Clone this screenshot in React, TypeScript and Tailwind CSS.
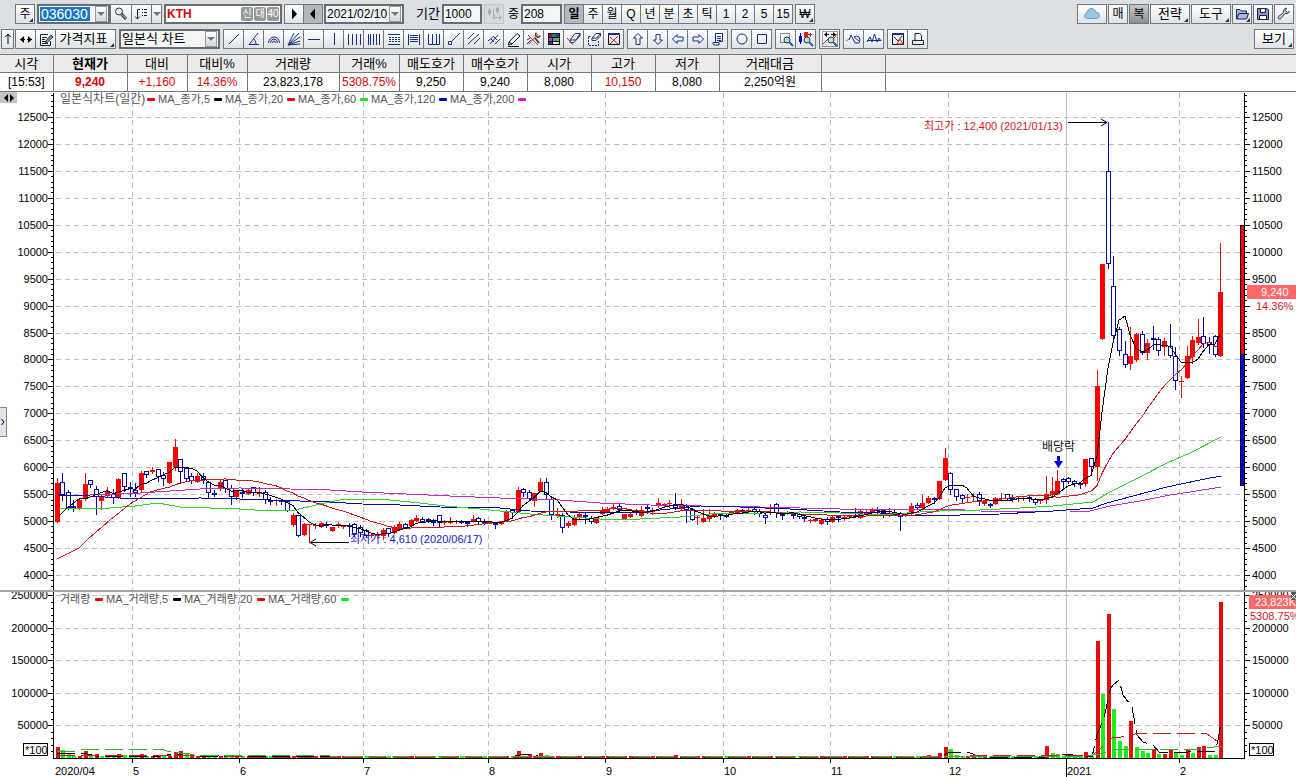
import { FunctionComponent, ReactNode } from 'react';

const NAVY = '#1c2f7c';
const BLUE = '#0808a8';
const RED = '#ff0000';

// one candle per trading day: direction, high, body top, body bottom, low (chart units)
const CANDLES = `
u 478 483 522 522|d 473 482 495 500|d 490 492 508 509|d 500 506 508 511|u 499 500 509 509|u 473 484 499 500|d 480 480 485 487|d 486 489 497 514
u 495 497 501 509|u 487 491 496 497|d 489 494 498 503|u 478 479 498 498|d 473 473 487 491|d 482 487 489 496|d 483 490 493 496|u 471 473 490 491
d 471 471 475 477|u 467 470 472 473|d 469 469 477 481|d 472 475 479 485|u 462 462 483 483|u 439 447 467 470|d 459 459 472 483|d 468 468 479 481
d 473 476 481 483|u 473 476 482 482|d 473 476 480 483|d 482 482 493 497|d 490 493 495 496|u 480 482 488 490|d 480 480 489 492|d 485 488 497 504
u 490 491 497 499|d 489 492 494 497|u 489 490 494 494|d 487 487 493 495|u 487 493 494 496|d 490 492 500 503|d 497 500 501 504|u 499 500 501 505
d 499 500 501 504|d 501 501 511 511|u 513 515 525 526|d 515 515 536 536|u 523 524 535 535|u 524 524 525 542|u 523 525 526 528|u 522 523 527 527
d 522 524 526 527|u 527 527 531 531|u 522 524 526 527|u 525 525 527 528|d 523 525 527 536|d 523 524 534 536|d 525 527 533 536|d 529 530 536 536
u 533 535 536 537|u 532 535 536 538|u 528 530 536 539|d 528 528 534 536|u 525 527 533 533|u 522 524 530 530|d 523 524 528 528|u 519 520 526 526
u 515 518 521 521|d 517 519 522 522|d 518 519 521 522|d 519 521 522 525|d 515 515 523 526|u 520 521 523 524|u 517 521 523 523|u 520 521 522 523
d 520 521 522 523|d 521 522 523 526|u 515 519 521 521|d 517 518 522 524|d 519 521 523 524|u 521 522 523 523|d 522 523 525 528|u 521 521 524 524
u 510 511 521 521|d 509 510 513 518|u 487 490 512 512|d 488 489 493 496|d 490 492 499 500|u 493 493 501 506|u 478 482 491 491|d 478 482 495 498
d 498 499 515 519|u 508 514 516 517|d 513 515 528 532|u 521 523 526 527|u 515 517 525 525|u 513 514 518 518|d 513 515 517 523|d 516 518 522 523
u 517 518 523 523|u 507 510 514 514|u 507 509 512 512|u 503 507 509 509|d 504 506 510 511|u 514 514 519 519|u 513 514 517 517|d 509 510 513 514
u 506 510 516 516|d 505 507 509 513|u 508 511 512 514|u 498 503 506 507|u 503 504 506 507|u 500 503 504 507|d 493 504 508 509|u 499 504 509 509
d 504 505 510 522|d 508 509 520 520|u 515 517 518 524|u 509 518 522 522|u 509 515 519 521|u 512 513 517 517|d 513 514 516 519|d 514 515 516 517
u 511 512 513 514|u 509 510 513 513|d 509 510 512 513|u 508 510 512 513|d 508 509 512 514|d 509 511 514 516|d 514 515 518 523|u 504 508 509 514
d 503 504 513 517|d 513 514 515 519|u 511 512 513 514|d 513 514 515 518|d 513 514 517 518|d 515 517 519 521|u 519 520 521 522|u 518 519 521 521
u 518 520 524 524|d 517 519 522 524|u 516 517 522 522|d 515 516 518 521|u 515 517 518 520|u 515 516 517 518|d 508 515 517 517|u 509 511 518 518
u 510 512 514 514|u 508 509 512 512|d 507 509 511 514|d 509 510 513 517|u 508 513 515 516|d 509 513 515 515|d 512 513 517 530|u 513 514 516 516
u 503 506 514 514|d 503 505 508 509|u 495 503 508 508|u 496 498 503 503|d 497 498 500 503|u 481 481 499 499|u 448 458 480 480|d 472 473 490 494
d 489 489 497 500|d 494 495 499 502|u 494 497 498 502|u 493 496 497 500|d 492 494 501 505|u 501 501 504 505|d 503 504 506 507|u 497 498 504 504
u 493 498 499 500|d 494 494 499 499|d 495 498 500 501|u 496 498 499 501|u 497 498 499 500|d 496 497 499 501|d 498 499 503 504|u 499 500 501 503
u 476 494 500 503|u 477 491 495 495|u 470 481 494 494|d 478 479 482 488|d 477 478 482 483|d 480 481 484 486|d 482 483 485 488|u 459 459 484 486
d 458 458 467 475|u 370 386 467 480|u 264 264 339 339|d 122 171 264 268|d 256 286 336 340|d 327 329 351 355|d 341 354 365 367|u 327 356 364 369
u 333 334 360 361|d 331 334 353 354|u 339 343 353 359|d 326 338 340 349|d 337 339 351 355|u 338 341 347 355|d 324 346 356 357|d 347 356 381 389
u 376 381 382 397|u 346 356 378 378|u 336 340 357 363|u 319 337 343 344|d 317 336 344 347|d 337 342 345 353|d 335 336 355 356|u 243 292 356 356`
  .trim()
  .split(/[|\n]/)
  .map((row, i) => {
    const [dir, ...values] = row.trim().split(' ');
    const [high, top, bottom, low] = values.map(Number);
    return { up: dir === 'u', high, top, bottom, low, x: Math.round(56.5 + i * 5.622) };
  });

// volume bars taller than the base line, negative ones are drawn green
const VOLUMES: Record<number, number> = {
  0: 11, 1: -8, 2: -4, 3: -2, 4: 2, 5: 7, 6: -3, 7: 4, 8: -2, 9: -3, 11: 4, 12: -3, 15: 4, 18: 3,
  21: 6, 22: 7, 23: -4, 24: 4, 26: 2, 82: 7, 84: 4, 86: 5, 87: -3, 110: 3, 155: 3, 157: 5,
  158: 11, 159: -9, 160: -3, 161: -2, 165: 3, 176: 12, 177: -5, 178: -4, 183: 6, 184: -2,
  185: 117, 186: -64, 187: 144, 188: -49, 189: -17, 190: -12, 191: 37, 192: -11, 193: -7,
  194: -5, 195: 9, 196: -4, 197: 4, 198: 9, 199: -5, 200: -3, 201: 8, 202: -5, 203: 11,
  204: 12, 205: -3, 206: -3, 207: 156,
};

const MONTHS = [
  { x: 132, label: '5' }, { x: 239, label: '6' }, { x: 363, label: '7' }, { x: 488, label: '8' },
  { x: 605, label: '9' }, { x: 723, label: '10' }, { x: 830, label: '11' }, { x: 948, label: '12' },
  { x: 1066, label: '2021' }, { x: 1179, label: '2' },
];

const priceY = (price: number) => Math.round(117 + (12500 - price) * 0.05388);
const volumeY = (volume: number) => Math.round(758 - volume * 0.000652);
const PRICES = Array.from({ length: 18 }, (_, i) => 12500 - i * 500);
const VOLUME_STEPS = [250000, 200000, 150000, 100000, 50000];

const movingAverage = (days: number) =>
  CANDLES.slice(days - 1).map((candle, i) => {
    const sum = CANDLES.slice(i, i + days).reduce((acc, c) => acc + (c.up ? c.top : c.bottom), 0);
    return `${candle.x},${(sum / days).toFixed(1)}`;
  }).join(' ');

const PRICE_LINES = [
  {
    color: '#c030c0',
    points: '57,496 90,495 140,493 200,489 240,488 290,489 330,490 362,492 450,496 500,498 560,500 600,503 650,505 700,506 760,507 800,508 840,509 950,509 980,511 1053,512 1070,512 1090,511 1110,506 1140,501 1170,495 1190,492 1221,487',
  },
  {
    color: BLUE,
    points: '57,495 90,496 120,498 150,499 200,498 240,499 300,501 330,502 362,504 400,505 440,507 500,508 530,511 570,512 600,513 640,512 670,509 700,506 740,507 790,509 840,512 880,513 900,515 960,515 1000,514 1053,511 1093,508 1107,503 1133,496 1167,487 1200,480 1221,476',
  },
  {
    color: '#30d030',
    points: '59,508 110,508 135,506 158,503 180,507 210,508 240,509 270,511 295,510 320,504 340,500 362,499 390,500 420,503 445,506 480,509 510,512 530,514 570,517 600,519 640,519 680,517 700,515 720,513 760,513 800,512 840,513 880,515 920,512 940,511 980,510 1020,508 1053,506 1093,502 1110,492 1140,477 1167,463 1190,453 1221,437',
  },
  {
    color: '#c02020',
    points: `57,559 79,548 88,539 110,520 130,504 150,492 ${movingAverage(20)}`,
  },
  { color: '#000000', points: `59,516 66,509 ${movingAverage(5)}` },
];

const VOLUME_LINES = [
  {
    color: '#000000',
    points: '57,753 82,753 97,756 160,756 175,754 190,756 510,757 525,754 545,757 940,757 950,752 968,752 975,755 990,757 1045,757 1065,754 1080,756 1092,757 1097,735 1104,718 1110,690 1113,685 1119,680 1123,695 1132,707 1137,735 1143,742 1153,745 1159,752 1183,753 1193,751 1215,751 1218,740 1221,723',
  },
  {
    color: '#c02020',
    points: '57,755 200,755 250,757 510,757 560,757 940,757 1000,755 1060,755 1092,756 1104,745 1112,738 1130,736 1135,734 1200,733 1207,734 1217,741 1221,741',
  },
  {
    color: '#30b030',
    points: '57,751 75,751 88,749 160,749 171,752 200,755 313,755 330,756 1085,756 1100,754 1113,750 1200,749 1221,746',
  },
];

const LEGEND = [
  { x: 60, label: '일본식차트(일간)', swatch: 147, color: '#e01010', y: 103, big: true },
  { x: 158, label: 'MA_종가,5', swatch: 214, color: '#000000', y: 103 },
  { x: 225, label: 'MA_종가,20', swatch: 287, color: '#e01010', y: 103 },
  { x: 298, label: 'MA_종가,60', swatch: 360, color: '#20e020', y: 103 },
  { x: 371, label: 'MA_종가,120', swatch: 439, color: '#0000c0', y: 103 },
  { x: 450, label: 'MA_종가,200', swatch: 518, color: '#e010d0', y: 103 },
  { x: 60, label: '거래량', swatch: 95, color: '#e01010', y: 603 },
  { x: 106, label: 'MA_거래량,5', swatch: 173, color: '#000000', y: 603 },
  { x: 184, label: 'MA_거래량,20', swatch: 257, color: '#e01010', y: 603 },
  { x: 268, label: 'MA_거래량,60', swatch: 341, color: '#20e020', y: 603 },
];

const QUOTES = [
  { name: '시각', value: '[15:53]', width: 'w-[53px]' },
  { name: '현재가', value: '9,240', width: 'w-[74px]', red: true, bold: true },
  { name: '대비', value: '+1,160', width: 'w-[60px]', red: true },
  { name: '대비%', value: '14.36%', width: 'w-[60px]', red: true },
  { name: '거래량', value: '23,823,178', width: 'w-[92px]' },
  { name: '거래%', value: '5308.75%', width: 'w-[60px]', red: true },
  { name: '매도호가', value: '9,250', width: 'w-[64px]' },
  { name: '매수호가', value: '9,240', width: 'w-[64px]' },
  { name: '시가', value: '8,080', width: 'w-[64px]' },
  { name: '고가', value: '10,150', width: 'w-[64px]', red: true },
  { name: '저가', value: '8,080', width: 'w-[64px]' },
  { name: '거래대금', value: '2,250억원', width: 'w-[102px]' },
  { name: '', value: '', width: 'w-[64px]' },
  { name: '', value: '', width: '' },
];

const PERIODS = ['일', '주', '월', 'Q', '년', '분', '초', '틱', '1', '2', '5', '15'];

interface IconProps {
  d?: string;
  color?: string;
  children?: ReactNode;
}

const Icon: FunctionComponent<IconProps> = ({ d, color = NAVY, children }) => (
  <svg viewBox="0 0 18 18" className="h-[18px] w-[18px] shrink-0" fill="none" stroke={color} aria-hidden="true">
    {d && <path d={d} />}
    {children}
  </svg>
);

const magnifier = (
  <>
    <circle cx="10" cy="10" r="3" fill="#a8e8e8" stroke="#333" />
    <path d="M12.5 12.5l3.5 3.5" stroke="#2060a0" strokeWidth="2" />
  </>
);

const DRAW_TOOLS = [
  { name: '추세선', icon: <Icon d="M4 14L14 4" /> },
  { name: '각도선', icon: <Icon d="M13 3L4 14.5H14M9 9q2 2 2 5" /> },
  { name: '원호', icon: <Icon d="M3.5 13a5.5 6 0 0 1 11 0M5.5 13a3.5 4 0 0 1 7 0M7.5 13a1.5 2 0 0 1 3 0" /> },
  { name: '팬', icon: <Icon d="M3 15L14 3M3 15L9 3M3 15L15 7M3 15L15 11M3 15L15 14" /> },
  { name: '수평선', icon: <Icon d="M3 9.5H15" /> },
  { name: '수직선', icon: <Icon d="M9.5 3V15" /> },
  { name: '시간대', icon: <Icon d="M3.5 4V15M7.5 4V15M11.5 4V15M15.5 4V15" /> },
  { name: '피보나치 시간대', icon: <Icon d="M3.5 4V15M5.5 4V15M8.5 4V15M11.5 4V15M14.5 4V15" /> },
  {
    name: '되돌림',
    icon: <Icon d="M3 4.5H15M3 14.5H15"><path d="M4 7.5H15M4 9.5H15M4 11.5H15" strokeDasharray="2 1" /></Icon>,
  },
  { name: '분할선', icon: <Icon d="M3.5 4V15M14.5 4V15M5 5.5H13M5 7.5H13M5 9.5H13M5 11.5H13" /> },
  { name: '사이클', icon: <Icon d="M3.5 4V14.5H7.5V4M7.5 14.5H11.5V4M11.5 14.5H14.5V4" /> },
  { name: '연장선', icon: <Icon d="M7 11L15 3M3.5 11.5H6.5V14.5H3.5Z" /> },
  { name: '평행선', icon: <Icon d="M3 9L9 3M3 14L14 4M9 14L15 8" /> },
  { name: '삼등분선', icon: <Icon d="M3 11L9 6M5 14L13 5M10 14L15 9M6 9l3 3M9 7l3 3" /> },
  { name: '펜', icon: <Icon color="#111" d="M4 12L12 3.5L15 6L7 14L3.5 15Z M4 12l3 2M3 16.5H14" /> },
  {
    name: '설정',
    icon: (
      <Icon>
        <path d="M10 8L14 13" stroke="#444" strokeWidth="2" />
        <path d="M11 2.5L10.500 5.500L13 7.500L15.500 5.500" stroke="#444" strokeWidth="1.5" />
        <path d="M3 5L13 15M13 4L4 14" stroke="#d02020" />
        <path d="M2 14L6 10M2 10L5 8" />
      </Icon>
    ),
  },
  {
    name: '색상',
    icon: (
      <Icon>
        <g stroke="none">
          <rect x="3" y="3" width="12" height="12" fill="#111" />
          <path d="M4 4h3v3H4z" fill="#882030" /><path d="M7 4h4v3H7z" fill="#208070" />
          <path d="M11 4h3v3h-3z" fill="#3040a0" /><path d="M4 8h3v3H4z" fill="#c040a0" />
          <path d="M8 8h3v3H8z" fill="#40a0e0" /><path d="M11 8h3v3h-3z" fill="#50c050" />
          <path d="M4 12h3v2H4z" fill="#3040a0" /><path d="M8 12h3v2H8z" fill="#e0f0ff" />
          <path d="M11 12h3v2h-3z" fill="#f0e070" />
        </g>
      </Icon>
    ),
  },
  {
    name: '지우기',
    icon: <Icon d="M5 10L10 3.5H15L11 10Z M5 10V12.5H9L15 6V3.5"><path d="M2 8L8 15" stroke="#d02020" /></Icon>,
  },
  {
    name: '전체 지우기',
    icon: (
      <Icon d="M7 8L11 3.5H15.5L12 8Z M7 8V10.5H11L15.5 6V3.5">
        <path d="M3.5 6.5H6M3.5 7V15.5H13.5V11" strokeDasharray="2 1" />
      </Icon>
    ),
  },
  {
    name: '닫기',
    icon: (
      <Icon color="#111" d="M3.5 4.5H14.5V14.5H3.5Z">
        <path d="M3 4H15" stroke={NAVY} strokeWidth="2" />
        <path d="M5 7L13 14M13 6L5 14" stroke="#c02020" />
      </Icon>
    ),
  },
];

const ARROW_TOOLS = [
  { name: '위쪽', icon: <Icon d="M9 3.5L13.5 8H11V14.5H7V8H4.5Z" /> },
  { name: '아래쪽', icon: <Icon d="M9 14.5L13.5 10H11V4.5H7V10H4.5Z" /> },
  { name: '왼쪽', icon: <Icon d="M3.5 9L8 4.5V7H14V11H8V13.5Z" /> },
  { name: '오른쪽', icon: <Icon d="M14.5 9L10 4.5V7H4V11H10V13.5Z" /> },
  { name: '메모', icon: <Icon d="M6.5 12V3.5H13.5V11.5H10M8 6.5H12M8 8.5H12M8 10.5H12M4 12.5H10V15H5Q3 14 4 12.5Z" /> },
];

const SHAPE_TOOLS = [
  { name: '원', icon: <Icon><circle cx="9" cy="9" r="5" /></Icon> },
  { name: '사각형', icon: <Icon d="M4.5 4.5H13.5V13.5H4.5Z" /> },
];

const ZOOM_TOOLS = [
  {
    name: '영역 확대',
    icon: <Icon><path d="M3.5 3.5H12.5V12.5H3.5Z" stroke="#222" strokeDasharray="1 1" />{magnifier}</Icon>,
  },
  {
    name: '봉 확대',
    icon: (
      <Icon>
        <path d="M3.5 3V14" stroke="#0000c0" /><path d="M2 6h3v6H2z" fill="#0000c0" stroke="none" />
        <path d="M7 2h4v5H7z" fill="#e02020" stroke="none" /><path d="M11 4.5h4M13.5 3v4" stroke="#c02020" />
        {magnifier}
      </Icon>
    ),
  },
];

const FIT_TOOLS = [
  {
    name: '맞춤',
    icon: (
      <Icon>
        <path d="M1.5 1.5H16.5V16.5H1.5Z" stroke="#444" strokeDasharray="1 1" />
        <path d="M2 14L7 9L11 11L16 4" stroke="#d02020" />
        <path d="M4 4.5H8M10 4.5H14" stroke="#000" />
        <path d="M6 2v5l-3-2.5zM12 2v5l3-2.5z" fill="#000" stroke="none" />
        {magnifier}
      </Icon>
    ),
  },
];

const WAVE_TOOLS = [
  {
    name: '파동',
    icon: <Icon d="M4 10L6 5L10 13L14 13Q16 10 14 7Q11 5 9 7L14 11"><path d="M1 11L4 9" stroke="#777" /></Icon>,
  },
  { name: '파형', icon: <Icon d="M2 12L5 7L7 12L9.5 4L12 12L14 8L16 11M2 10.5H16" /> },
];

const PRINT_TOOLS = [
  {
    name: '차트 저장',
    icon: (
      <Icon color="#111" d="M3.5 4.5H14.5V14.5H3.5Z">
        <path d="M3 4H15" stroke={NAVY} strokeWidth="2" />
        <path d="M5 7L9 11L13 6" stroke={NAVY} /><path d="M8 14L11 9L14 14Z" stroke="#d02020" />
      </Icon>
    ),
  },
  { name: '인쇄', icon: <Icon color="#222" d="M6 10.5V3.5H10.5L12.5 5.5V10.5M3.5 10.5H14.5V14.5H3.5Z" /> },
];

interface ToolButtonProps {
  name: string;
  className?: string;
  children: ReactNode;
  corner?: boolean;
}

const ToolButton: FunctionComponent<ToolButtonProps> = ({
  name,
  className = 'w-5 bg-linear-to-b from-white to-[#dfe4ea]',
  children,
  corner,
}) => (
  <button
    type="button"
    aria-label={name}
    className={`relative flex h-5 shrink-0 items-center justify-center overflow-hidden border border-[#707878] ${className}`}
  >
    {children}
    {corner && (
      <span className="absolute right-px bottom-px border-2 border-transparent border-r-[#333] border-b-[#333]" />
    )}
  </button>
);

const ToolGroup: FunctionComponent<{ tools: { name: string; icon: ReactNode }[] }> = ({ tools }) => (
  <div className="flex shrink-0 border-r border-[#707878]">
    {tools.map((tool) => (
      <ToolButton
        key={tool.name}
        name={tool.name}
        className="w-5 border-r-0 bg-linear-to-b from-white to-[#dfe4ea]"
      >
        {tool.icon}
      </ToolButton>
    ))}
  </div>
);

const DropArrow: FunctionComponent = () => (
  <svg viewBox="0 0 8 4" className="h-1 w-2 shrink-0" fill="#777" aria-hidden="true">
    <path d="M0 0h8L4 4z" />
  </svg>
);

const dropButton = 'flex h-4 w-3 shrink-0 items-center justify-center border border-[#999] bg-linear-to-b from-white to-[#d4d9df]';

const TopRow: FunctionComponent = () => (
  <div className="flex h-5 items-center pr-0.5 pl-[15px]">
    <ToolButton name="주식" corner>주</ToolButton>
    <div className="ml-0.5 flex h-5 w-[73px] shrink-0 items-center justify-between border-2 border-[#666d72] bg-[#f3f5f7] px-px">
      <input
        aria-label="종목코드"
        defaultValue="036030"
        className="h-[14px] w-[50px] bg-[#1b74c4] px-px text-sm leading-none text-white outline-none"
      />
      <button type="button" aria-label="종목 목록" className={dropButton}><DropArrow /></button>
    </div>
    <ToolButton name="종목 검색" className="w-[22px] bg-linear-to-b from-white to-[#dfe4ea]">
      <Icon color="#333">
        <circle cx="7" cy="6.5" r="3.5" fill="#e8eef4" />
        <path d="M9.5 9L14 14" strokeWidth="3" />
        <path d="M10 9.5L14 13.5" stroke="#fff" />
      </Icon>
    </ToolButton>
    <ToolButton name="정렬" className="w-5 border-l-0 bg-linear-to-b from-white to-[#dfe4ea]">
      <Icon color="#222" d="M7 4.5H4.5V14M2 11.5L4.5 14L7 11.5">
        <path d="M9 4.5H14M9 7.5H14M9 10.5H14" strokeDasharray="1 1 3" />
      </Icon>
    </ToolButton>
    <ToolButton name="정렬 목록" className="w-[10px] border-l-0 bg-linear-to-b from-white to-[#dfe4ea]"><DropArrow /></ToolButton>
    <div className="ml-0.5 flex h-5 w-[118px] shrink-0 items-center gap-px border-2 border-[#666d72] bg-white px-px">
      <input
        aria-label="종목명"
        defaultValue="KTH"
        className="w-full min-w-0 bg-transparent text-xs font-bold text-[#d40808] outline-none"
      />
      {['신', '대', '40'].map((badge) => (
        <span key={badge} className="flex h-[14px] w-3 shrink-0 items-center justify-center rounded-xs bg-[#999] text-[10px] leading-none text-white">
          {badge}
        </span>
      ))}
    </div>
    <div className="ml-0.5 flex shrink-0">
      <ToolButton name="다음 종목">
        <Icon><path d="M7 3.5L12 9L7 14.5Z" fill="#000" stroke="none" /></Icon>
      </ToolButton>
      <ToolButton name="이전 종목" className="w-[19px] border-l-0 bg-[#b4b7bb]">
        <Icon><path d="M11 3.5L6 9L11 14.5Z" fill="#000" stroke="none" /></Icon>
      </ToolButton>
    </div>
    <div className="ml-px flex h-5 w-20 shrink-0 items-center justify-between border-2 border-[#666d72] bg-[#f3f5f7] px-px">
      <input aria-label="날짜" defaultValue="2021/02/10" className="w-[61px] min-w-0 bg-transparent text-xs outline-none" />
      <button type="button" aria-label="달력" className={dropButton}><DropArrow /></button>
    </div>
    <label htmlFor="period" className="ml-3 shrink-0 text-[13px]">기간</label>
    <input
      id="period"
      defaultValue="1000"
      className="ml-0.5 h-5 w-10 shrink-0 border-2 border-[#666d72] bg-[#f3f5f7] px-px text-xs outline-none"
    />
    <ToolButton name="봉 간격" className="ml-0.5 w-5 border-[#c0c5c9] bg-[#d5dadd]">
      <Icon color="#aaa" d="M4.5 3V11M12.5 2V9M8.5 4V13M8 12.5H16M10 10L8 12.5L10 15M14 10L16 12.5L14 15">
        <path d="M3 5h3v4H3zM11 3h3v4h-3z" fill="#aaa" stroke="none" />
      </Icon>
    </ToolButton>
    <label htmlFor="count" className="ml-1 shrink-0 text-xs">중</label>
    <input
      id="count"
      defaultValue="208"
      className="ml-0.5 h-5 w-[41px] shrink-0 border-2 border-[#666d72] bg-[#f3f5f7] px-px text-xs outline-none"
    />
    <div className="ml-0.5 flex shrink-0 border-r border-[#707878]">
      {PERIODS.map((period, i) => (
        <ToolButton
          key={period}
          name={period}
          className={
            i === 0
              ? 'w-[19px] border-r-0 bg-[#b4b7bb] font-bold'
              : 'w-[19px] border-r-0 bg-linear-to-b from-white to-[#dfe4ea]'
          }
        >
          {period}
        </ToolButton>
      ))}
    </div>
    <ToolButton name="원화" corner className="ml-0.5 w-5 bg-linear-to-b from-white to-[#dfe4ea]">₩</ToolButton>

    <div className="ml-auto flex shrink-0 gap-px">
      <ToolButton name="클라우드" className="w-[30px] bg-linear-to-b from-white to-[#dfe4ea]">
        <Icon color="#6f9fc4"><path d="M4 13.5a2.500 2.500 0 0 1 0-5a4.500 4.500 0 0 1 9-1a3 3 0 0 1 1 6Z" fill="#9cc4e4" /></Icon>
      </ToolButton>
      <ToolButton name="매매">매</ToolButton>
      <ToolButton name="복수" className="w-5 border-[#222] bg-linear-to-b from-[#c8c8c8] to-[#8f8f8f]">복</ToolButton>
      <ToolButton name="전략" corner className="w-10 bg-linear-to-b from-white to-[#dfe4ea] text-[13px]">전략</ToolButton>
      <ToolButton name="도구" corner className="w-10 bg-linear-to-b from-white to-[#dfe4ea] text-[13px]">도구</ToolButton>
      <ToolButton name="열기" corner>
        <Icon color="#1a2040"><path d="M3.5 14V4.5H7L8.5 6H13.5V8M3.5 14L6 8.5H15.5L13.5 14Z" fill="#a8b8e0" /></Icon>
      </ToolButton>
      <ToolButton name="저장">
        <Icon color="#1a2040">
          <path d="M3.5 3.5H13L14.5 5V14.5H3.5Z" fill="#8898d0" />
          <path d="M6.5 3.5h5v4h-5zM5.5 10.5h7v4h-7z" fill="#fff" />
        </Icon>
      </ToolButton>
      <ToolButton name="환경설정">
        <Icon color="#444">
          <path d="M14.5 6.5a3.500 3.500 0 0 1-4.500 2L6 13.500a1.500 1.500 0 0 1-2.500-2L8.500 7.500a3.500 3.500 0 0 1 3-4.500L10.500 5.500L12.500 7.500Z" fill="#ccc" />
        </Icon>
      </ToolButton>
    </div>
  </div>
);

const DrawRow: FunctionComponent = () => (
  <div className="flex h-5 items-center gap-[3px] pr-0.5 pl-px">
    <div className="flex shrink-0">
      <ToolButton name="위로" className="mr-px w-[13px] bg-linear-to-b from-white to-[#dfe4ea]">
        <Icon color="#000" d="M9 14V4.5M6.5 7L9 4L11.5 7" />
      </ToolButton>
      <ToolButton name="좌우" className="w-5 border-r-0 bg-linear-to-b from-white to-[#dfe4ea]">
        <Icon color="#000">
          <path d="M3 9.5H8M10 9.5H15" />
          <path d="M7 6v7L3 9.5zM11 6v7l4-3.5z" fill="#000" stroke="none" />
        </Icon>
      </ToolButton>
      <ToolButton name="편집" className="w-5 border-r-0 bg-linear-to-b from-white to-[#dfe4ea]">
        <Icon color="#222">
          <path d="M11 4.5H3.5V15.5H13.5V11M5 7.5H10M5 9.5H8M5 11.5H8M5 13.5H11" />
          <path d="M8 12L14 5L16 7L10 12.5Z" fill="#7aa8d8" />
        </Icon>
      </ToolButton>
      <ToolButton name="가격지표" corner className="w-[61px] bg-linear-to-b from-white to-[#dfe4ea] pr-1 text-[13px]">가격지표</ToolButton>
    </div>
    <div className="relative h-5 w-[101px] shrink-0 border-2 border-[#666d72] bg-[#f3f5f7]">
      <select aria-label="차트 종류" className="h-4 w-full appearance-none bg-transparent pl-px text-[13px] leading-4 outline-none">
        <option>일본식 차트</option>
      </select>
      <span className={`pointer-events-none absolute top-0 right-px ${dropButton}`}><DropArrow /></span>
    </div>
    <ToolGroup tools={DRAW_TOOLS} />
    <ToolGroup tools={ARROW_TOOLS} />
    <ToolGroup tools={SHAPE_TOOLS} />
    <ToolGroup tools={ZOOM_TOOLS} />
    <ToolGroup tools={FIT_TOOLS} />
    <ToolGroup tools={WAVE_TOOLS} />
    <ToolGroup tools={PRINT_TOOLS} />
    <div className="ml-auto">
      <ToolButton name="보기" corner className="w-10 bg-linear-to-b from-white to-[#dfe4ea] text-[13px]">보기</ToolButton>
    </div>
  </div>
);

const QuoteTable: FunctionComponent = () => (
  <table className="w-full table-fixed border-collapse border-y border-[#777] text-xs">
    <thead>
      <tr className="bg-[#ebebeb]">
        {QUOTES.map((quote, i) => (
          <th
            key={i}
            className={`${quote.width} h-[18px] overflow-hidden border-b border-l border-[#777] p-0 text-[13px] leading-4 whitespace-nowrap first:border-l-0 ${quote.bold ? 'font-bold' : 'font-normal'}`}
          >
            {quote.name}
          </th>
        ))}
      </tr>
    </thead>
    <tbody>
      <tr className="bg-white">
        {QUOTES.map((quote, i) => (
          <td
            key={i}
            className={`h-[19px] border-l border-[#777] p-0 text-center leading-4 whitespace-nowrap first:border-l-0 ${quote.red ? 'text-[#d40808]' : ''} ${quote.bold ? 'font-bold' : ''}`}
          >
            {quote.value}
          </td>
        ))}
      </tr>
    </tbody>
  </table>
);

const Grid: FunctionComponent = () => (
  <g stroke="#bdbdbd" strokeDasharray="5 4" shapeRendering="crispEdges">
    {PRICES.map((price) => (
      <path key={price} d={`M56 ${priceY(price) + 0.5}H1240`} />
    ))}
    {VOLUME_STEPS.map((volume) => (
      <path key={volume} d={`M56 ${volumeY(volume) + 0.5}H1240`} />
    ))}
    {MONTHS.map(({ x, label }) => (
      <path key={x} d={`M${x + 0.5} 93V757`} strokeDasharray={label === '2021' ? 'none' : '5 4'} />
    ))}
  </g>
);

const Axes: FunctionComponent = () => {
  const minorPrices = Array.from({ length: 92 }, (_, i) => 12900 - i * 100).filter((p) => priceY(p) < 590);
  const minorVolumes = Array.from({ length: 25 }, (_, i) => 10000 + i * 10000);
  const ticks = [
    ...minorPrices.map((p) => ({ y: priceY(p), major: p % 500 === 0 })),
    ...minorVolumes.map((v) => ({ y: volumeY(v), major: v % 50000 === 0 })),
  ];
  return (
    <>
      <g stroke="#000" shapeRendering="crispEdges">
        <path d="M53.5 93V758M1244.5 93V758M53 758.5H1245" />
        {ticks.map(({ y, major }) => (
          <path key={y} d={`M${major ? 48 : 51} ${y + 0.5}H53M1245 ${y + 0.5}H${major ? 1250 : 1247}`} />
        ))}
        {MONTHS.map(({ x, label }) => (
          <path key={x} d={`M${x + 0.5} 758V${label === '2021' ? 777 : 763}`} />
        ))}
      </g>
      <g fontSize="11" fill="#000">
        {PRICES.map((price) => (
          <g key={price}>
            <text x="48" y={priceY(price) + 4} textAnchor="end">{price}</text>
            {price !== 9000 && <text x="1252" y={priceY(price) + 4}>{price}</text>}
          </g>
        ))}
        {VOLUME_STEPS.map((volume) => (
          <g key={volume}>
            <text x="48" y={volumeY(volume) + 4} textAnchor="end">{volume}</text>
            <text x="1252" y={volumeY(volume) + 4}>{volume}</text>
          </g>
        ))}
        <text x="55" y="775">2020/04</text>
        {MONTHS.map(({ x, label }) => (
          <text key={x} x={x + 1} y="775">{label}</text>
        ))}
        <path d="M23.5 743.5h24v12h-24zM1249.5 743.5h24v12h-24z" fill="#fff" stroke="#000" shapeRendering="crispEdges" />
        <text x="25" y="754">*100</text>
        <text x="1251" y="754">*100</text>
      </g>
    </>
  );
};

const Candles: FunctionComponent = () => (
  <g shapeRendering="crispEdges">
    {CANDLES.map(({ up, high, top, bottom, low, x }) => (
      <g key={x} stroke={up ? '#d01818' : BLUE}>
        <path d={`M${x + 0.5} ${high}V${low + 1}`} />
        {up ? (
          <rect x={x - 2} y={top} width="5" height={Math.max(bottom - top, 1)} fill={RED} stroke="none" />
        ) : (
          <rect x={x - 1.5} y={top + 0.5} width="4" height={Math.max(bottom - top - 1, 1)} fill="#fff" />
        )}
      </g>
    ))}
  </g>
);

const VolumeBars: FunctionComponent = () => (
  <g shapeRendering="crispEdges">
    {CANDLES.map(({ up, x }, i) => {
      const value = VOLUMES[i] ?? (up ? 2 : -2);
      const height = Math.abs(value);
      return <rect key={x} x={x - 1} y={758 - height} width="4" height={height} fill={value > 0 ? '#e80c0c' : '#18f018'} />;
    })}
  </g>
);

const Chart: FunctionComponent = () => (
  <svg viewBox="0 92 1296 685" className="block w-full" role="img" aria-label="KTH 일본식 차트">
    <rect x="0" y="92" width="1296" height="685" fill="#fff" />
    <Grid />
    <VolumeBars />
    <g fill="none" strokeDasharray="18 6">
      {VOLUME_LINES.map(({ color, points }) => (
        <polyline key={color} points={points} stroke={color} shapeRendering="crispEdges" />
      ))}
    </g>
    <Candles />
    <g fill="none" shapeRendering="crispEdges">
      {PRICE_LINES.map(({ color, points }) => (
        <polyline key={color} points={points} stroke={color} />
      ))}
    </g>
    <Axes />

    {/* range of the day beside the right axis */}
    <g stroke="#000" shapeRendering="crispEdges">
      <rect x="1240.5" y="225.5" width="4" height="129" fill={RED} />
      <rect x="1240.5" y="354.5" width="4" height="131" fill="#0000e0" />
    </g>

    <g fontSize="11">
      <g fill="none" stroke="#000">
        <path d="M1068 122.5H1107M1101 119L1107 122.5L1101 126" />
        <path d="M349 542.5H310M316 539L310 542.5L316 546" />
      </g>
      <text x="924" y="130" fill="#d01828">최고가 : 12,400 (2021/01/13)</text>
      <text x="350" y="543" fill="#1818c8">최저가 : 4,610 (2020/06/17)</text>
      <text x="1042" y="451" fontSize="12" fill="#111">배당락</text>
      <path d="M1057 456h3v5h3l-4.5 7l-4.5-7h3z" fill="#0000e8" />
    </g>

    <path d="M0 591H1296" stroke="#a6a6a6" strokeWidth="2" />

    {LEGEND.map(({ x, y, label, swatch, color, big }) => (
      <g key={`${x}-${y}`}>
        <text x={x} y={y} fontSize={big ? 12 : 11} fill="#555">{label}</text>
        <rect x={swatch} y={y - 5} width="8" height="3" rx="1" fill={color} />
      </g>
    ))}

    <g fontSize="11">
      <rect x="1247" y="285" width="49" height="14" fill="#ff6868" />
      <text x="1261" y="296" fill="#fff">9,240</text>
      <text x="1256" y="310" fill="#d01828">14.36%</text>
      <rect x="1249" y="595" width="47" height="14" fill="#ff6868" />
      <text x="1255" y="606" fill="#fff">23,823K</text>
      <text x="1250" y="620" fill="#d01828">5308.75%</text>
    </g>
  </svg>
);

export default function App() {
  return (
    <div className="w-full bg-white font-['Liberation_Sans','Noto_Sans_CJK_KR',sans-serif] text-xs text-black">
      <header className="flex flex-col gap-[5px] bg-[#dae0e4] pt-1 pb-[5px]">
        <TopRow />
        <DrawRow />
      </header>
      <QuoteTable />
      <main className="relative overflow-hidden">
        <Chart />
        <button
          type="button"
          aria-label="좌우 이동"
          className="absolute top-0 left-0 flex h-[11px] w-[17px] items-center justify-center bg-[#c4c4c4]"
        >
          <svg viewBox="0 0 12 8" className="h-2 w-3" aria-hidden="true">
            <path d="M5 0v8L1 4zM7 0v8l4-4z" />
          </svg>
        </button>
        <button
          type="button"
          aria-label="패널 열기"
          className="absolute top-[46%] left-0 flex h-[30px] w-[7px] items-center justify-center border border-l-0 border-[#888] bg-[#dfe4ea]"
        >
          <svg viewBox="0 0 4 6" className="h-1.5 w-1" fill="none" stroke="#000" aria-hidden="true">
            <path d="M.5 0l2.5 3l-2.5 3" />
          </svg>
        </button>
        <button
          type="button"
          aria-label="거래량 닫기"
          className="absolute top-[73%] right-0 flex h-2 w-[5px] items-center justify-center bg-[#555]"
        >
          <svg viewBox="0 0 5 5" className="h-[5px] w-[5px]" stroke="#fff" aria-hidden="true">
            <path d="M0 0l5 5M5 0l-5 5" />
          </svg>
        </button>
      </main>
    </div>
  );
}
